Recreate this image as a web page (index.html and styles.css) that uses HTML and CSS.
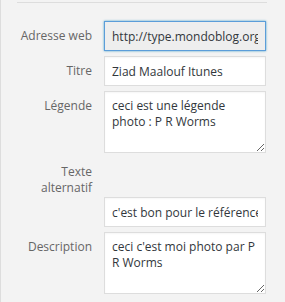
FILE: index.html
```html
<!DOCTYPE html>
<html lang="fr">
<head>
   <meta charset="UTF-8">
   <meta name="viewport" content="width=device-width, initial-scale=1.0">
   <title>Détails du fichier</title>
   <link rel="stylesheet" href="styles.css">
</head>
<body>

<div class="sidebar">
   <div class="settings">
       <label class="setting">
           <span class="name">Adresse web</span>
           <input type="text" class="field field-url" value="http://type.mondoblog.org/files/2014/05/ziad-maalouf-itunes.jpg" readonly>
       </label>
       <label class="setting">
           <span class="name">Titre</span>
           <input type="text" class="field" value="Ziad Maalouf Itunes">
       </label>
       <label class="setting">
           <span class="name">Légende</span>
           <textarea class="field area">ceci est une légende photo : P R Worms</textarea>
       </label>
       <label class="setting setting-alt">
           <span class="name">Texte alternatif</span>
       </label>
       <label class="setting">
           <span class="name"></span>
           <input type="text" class="field" value="c'est bon pour le référencement">
       </label>
       <label class="setting">
           <span class="name">Description</span>
           <textarea class="field area">ceci c'est moi photo par P R Worms</textarea>
       </label>
   </div>
</div>

</body>
</html>
```

FILE: styles.css
```css
body {
    font-family: "Open Sans", "Noto Sans", sans-serif;
    font-size: 12px;
    background-color: #f3f3f3;
    margin: 0;
    height: 302px;
    border-left: 1px solid #dddddd;
    box-sizing: border-box;
}
.sidebar {
    padding-left: 16px;
    padding-top: 2px;
}
.settings {
    width: 250px;
    border-top: 1px solid #dddddd;
    padding-top: 18px;
}
.setting {
    display: flex;
    align-items: flex-start;
    margin-bottom: 5px;
}
.name {
    width: 75px;
    flex: none;
    margin-right: 12px;
    padding-top: 7px;
    line-height: 16px;
    text-align: right;
    color: #666666;
}
.setting-alt {
    margin-bottom: 0;
}
.setting-alt .name {
    padding-top: 6px;
    padding-bottom: 1px;
}
.field {
    width: 162px;
    height: 30px;
    box-sizing: border-box;
    margin: 0;
    padding: 0 7px;
    border: 1px solid #dddddd;
    background-color: #ffffff;
    color: #32373c;
    font-family: "Open Sans", "Noto Sans", sans-serif;
    font-size: 12px;
    line-height: 16px;
    outline: none;
    box-shadow: inset 0 1px 2px rgba(0, 0, 0, 0.04);
}
.field-url {
    background-color: #eeeeee;
    border-color: #5b9dd9;
    box-shadow: 0 0 2px rgba(30, 140, 190, 0.8);
}
.area {
    height: 62px;
    padding: 6px 7px;
    resize: vertical;
    overflow: hidden;
}
```
